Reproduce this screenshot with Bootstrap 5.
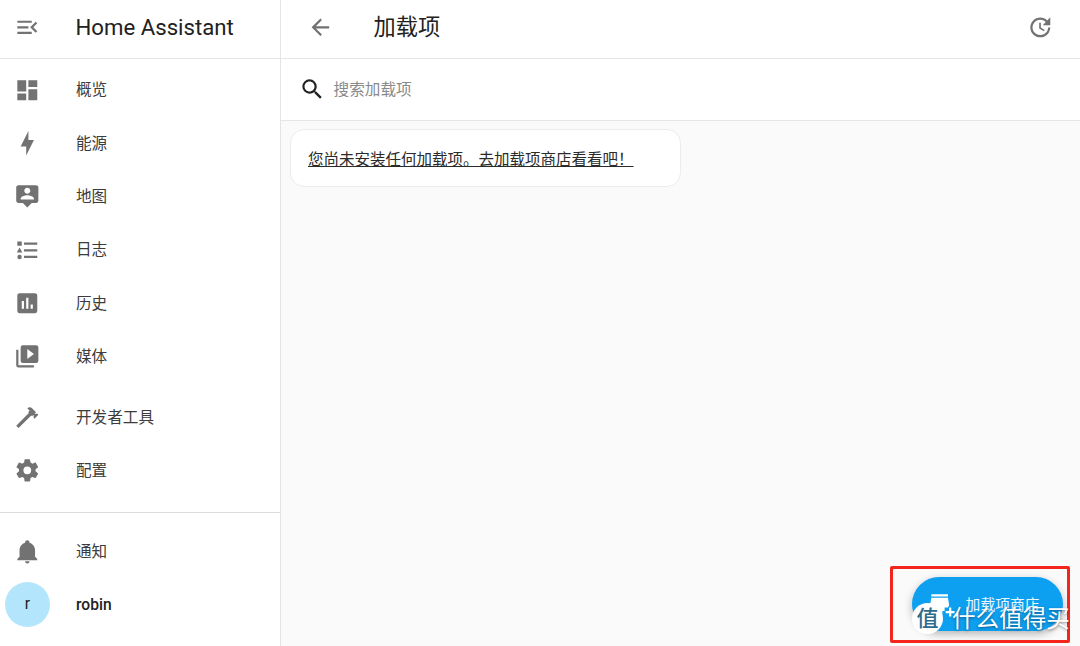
<!DOCTYPE html>
<html lang="zh-CN">
<head>
    <meta charset="UTF-8">
    <meta name="viewport" content="width=device-width, initial-scale=1.0">
    <title>加载项 - Home Assistant</title>
    <link href="https://cdn.jsdelivr.net/npm/bootstrap@5.3.0/dist/css/bootstrap.min.css" rel="stylesheet">
    <style>
        body {
            width: 1080px;
            height: 646px;
            overflow: hidden;
            background: #fff;
            color: #212121;
            font-family: Roboto, "Noto Sans CJK SC", sans-serif;
        }
        .ha-shell { height: 646px; position: relative; }
        .ha-side { width: 281px; border-right: 1px solid #e4e4e4; }
        .ha-top { height: 59px; padding-bottom: 3px; border-bottom: 1px solid #e6e6e6; }
        .ha-title { font-size: 22.2px; line-height: 1; }
        .ha-side .ha-title { margin-left: -.5px; }
        .ha-icon { width: 26.6px; height: 26.6px; fill: #727272; flex: none; }
        .ha-slot { width: 76px; padding-left: 14px; flex: none; }
        .ha-items { padding-top: 4.5px; }
        .ha-row { height: 53.3px; padding-top: 2px; font-size: 15.6px; color: #3c3c3c; text-decoration: none; }
        .ha-row .ha-slot { margin-top: -2px; }
        .ha-tools { margin-top: 7.5px; }
        .ha-foot { margin-top: auto; border-top: 1px solid #dcdcdc; padding-top: 11.5px; padding-bottom: 14.5px; }
        .ha-avatar {
            width: 45px;
            height: 45px;
            margin-left: -9px;
            border-radius: 50%;
            background: #b3e5fc;
            font-size: 15.6px;
            font-weight: 400;
        }
        .ha-user { font-weight: 500; color: #212121; }
        .ha-main { background: #fafafa; min-width: 0; }
        .ha-main .ha-top { background: #fff; padding-left: 26px; padding-right: 26px; }
        .ha-back { margin-right: 40px; }
        .ha-search { height: 62px; background: #fff; border-bottom: 1px solid #e6e6e6; padding-left: 18px; font-size: 15.6px; color: #8a8a8a; }
        .ha-search .ha-icon { fill: #212121; margin-right: 8px; }
        .ha-search span { padding-top: 3px; }
        .ha-empty {
            width: 391px;
            height: 58px;
            margin: 8px 0 0 9px;
            padding-left: 17px;
            padding-top: 5px;
            background: #fff;
            border: 1px solid #ececec;
            border-radius: 14px;
            font-size: 15.5px;
            color: #2b2b2b;
        }
        .ha-empty a { color: inherit; }
        .ha-fab {
            position: absolute;
            left: 912px;
            top: 577px;
            width: 151px;
            height: 54px;
            border-radius: 27px;
            background: #0d9ff0;
            color: #e8f6ff;
            font-size: 14.8px;
            padding-left: 16px;
            box-shadow: 0 3px 8px rgba(0, 0, 0, .28);
        }
        .ha-fab .ha-icon { fill: #fff; margin-right: 11px; }
        .ha-fab span { padding-top: 2px; }
        .ha-mark {
            position: absolute;
            left: 890px;
            top: 566px;
            width: 180px;
            height: 77px;
            border: 3px solid #f3251c;
            border-radius: 2px;
        }
        .ha-stamp {
            position: absolute;
            left: 912px;
            top: 603px;
            width: 31px;
            height: 31px;
            border-radius: 50%;
            background: #fff;
            color: #2f6b8c;
            font-size: 22px;
            font-weight: 500;
            line-height: 1;
        }
        .ha-water {
            position: absolute;
            left: 952px;
            top: 604px;
            color: #fff;
            font-size: 23.6px;
            line-height: 30px;
            white-space: nowrap;
            text-shadow: 0 1px 3px rgba(0, 0, 0, .45);
        }
    </style>
</head>
<body>
    <div class="ha-shell d-flex">
        <aside class="ha-side d-flex flex-column flex-shrink-0">
            <div class="ha-top d-flex align-items-center">
                <div class="ha-slot"><svg class="ha-icon" viewBox="0 0 24 24"><path d="M21,15.61L19.59,17L14.58,12L19.59,7L21,8.39L17.44,12L21,15.61M3,6H16V8H3V6M3,13V11H13V13H3M3,18V16H16V18H3Z"/></svg></div>
                <span class="ha-title">Home Assistant</span>
            </div>
            <nav class="ha-items d-flex flex-column">
                <a class="ha-row d-flex align-items-center" href="#"><span class="ha-slot d-flex"><svg class="ha-icon" viewBox="0 0 24 24"><path d="M13,3V9H21V3M13,21H21V11H13M3,21H11V15H3M3,13H11V3H3V13Z"/></svg></span>概览</a>
                <a class="ha-row d-flex align-items-center" href="#"><span class="ha-slot d-flex"><svg class="ha-icon" viewBox="0 0 24 24"><path d="M11 15H6L13 1V9H18L11 23V15Z"/></svg></span>能源</a>
                <a class="ha-row d-flex align-items-center" href="#"><span class="ha-slot d-flex"><svg class="ha-icon" viewBox="0 0 24 24"><path d="M20 2H4C2.9 2 2 2.9 2 4V16C2 17.1 2.9 18 4 18H8L12 22L16 18H20C21.1 18 22 17.1 22 16V4C22 2.9 21.1 2 20 2M12 4.3C13.5 4.3 14.7 5.5 14.7 7S13.5 9.7 12 9.7 9.3 8.5 9.3 7 10.5 4.3 12 4.3M18 15H6V14.1C6 12.1 10 11 12 11S18 12.1 18 14.1V15Z"/></svg></span>地图</a>
                <a class="ha-row d-flex align-items-center" href="#"><span class="ha-slot d-flex"><svg class="ha-icon" viewBox="0 0 24 24"><path d="M5,9.5L7.5,14H2.5L5,9.5M3,4H7V8H3V4M5,20A2,2 0 0,0 7,18A2,2 0 0,0 5,16A2,2 0 0,0 3,18A2,2 0 0,0 5,20M9,5V7H21V5H9M9,19H21V17H9V19M9,13H21V11H9V13Z"/></svg></span>日志</a>
                <a class="ha-row d-flex align-items-center" href="#"><span class="ha-slot d-flex"><svg class="ha-icon" viewBox="0 0 24 24"><path d="M9 17H7V10H9V17M13 17H11V7H13V17M17 17H15V13H17V17M19 3H5C3.9 3 3 3.9 3 5V19C3 20.1 3.9 21 5 21H19C20.1 21 21 20.1 21 19V5C21 3.9 20.1 3 19 3Z"/></svg></span>历史</a>
                <a class="ha-row d-flex align-items-center" href="#"><span class="ha-slot d-flex"><svg class="ha-icon" viewBox="0 0 24 24"><path d="M4,6H2V20A2,2 0 0,0 4,22H18V20H4V6M20,2A2,2 0 0,1 22,4V16A2,2 0 0,1 20,18H8A2,2 0 0,1 6,16V4A2,2 0 0,1 8,2H20M12,14.5L18,10L12,5.5V14.5Z"/></svg></span>媒体</a>
                <a class="ha-row ha-tools d-flex align-items-center" href="#"><span class="ha-slot d-flex"><svg class="ha-icon" viewBox="0 0 24 24"><path d="M2 19.63L13.43 8.2L12.72 7.5L14.14 6.07L12 3.89C13.2 2.7 15.09 2.7 16.27 3.89L19.87 7.5L18.45 8.91H21.29L22 9.62L18.45 13.21L17.74 12.5V9.62L16.27 11.04L15.56 10.33L4.13 21.76L2 19.63Z"/></svg></span>开发者工具</a>
                <a class="ha-row d-flex align-items-center" href="#"><span class="ha-slot d-flex"><svg class="ha-icon" viewBox="0 0 24 24"><path d="M12,15.5A3.5,3.5 0 0,1 8.5,12A3.5,3.5 0 0,1 12,8.5A3.5,3.5 0 0,1 15.5,12A3.5,3.5 0 0,1 12,15.5M19.43,12.97C19.47,12.65 19.5,12.33 19.5,12C19.5,11.67 19.47,11.34 19.43,11L21.54,9.37C21.73,9.22 21.78,8.95 21.66,8.73L19.66,5.27C19.54,5.05 19.27,4.96 19.05,5.05L16.56,6.05C16.04,5.66 15.5,5.32 14.87,5.07L14.5,2.42C14.46,2.18 14.25,2 14,2H10C9.75,2 9.54,2.18 9.5,2.42L9.13,5.07C8.5,5.32 7.96,5.66 7.44,6.05L4.95,5.05C4.73,4.96 4.46,5.05 4.34,5.27L2.34,8.73C2.21,8.95 2.27,9.22 2.46,9.37L4.57,11C4.53,11.34 4.5,11.67 4.5,12C4.5,12.33 4.53,12.65 4.57,12.97L2.46,14.63C2.27,14.78 2.21,15.05 2.34,15.27L4.34,18.73C4.46,18.95 4.73,19.03 4.95,18.95L7.44,17.94C7.96,18.34 8.5,18.68 9.13,18.93L9.5,21.58C9.54,21.82 9.75,22 10,22H14C14.25,22 14.46,21.82 14.5,21.58L14.87,18.93C15.5,18.67 16.04,18.34 16.56,17.94L19.05,18.95C19.27,19.03 19.54,18.95 19.66,18.73L21.66,15.27C21.78,15.05 21.73,14.78 21.54,14.63L19.43,12.97Z"/></svg></span>配置</a>
            </nav>
            <div class="ha-foot d-flex flex-column">
                <a class="ha-row d-flex align-items-center" href="#"><span class="ha-slot d-flex"><svg class="ha-icon" viewBox="0 0 24 24"><path d="M21,19V20H3V19L5,17V11C5,7.9 7.03,5.17 10,4.29C10,4.19 10,4.1 10,4A2,2 0 0,1 12,2A2,2 0 0,1 14,4C14,4.1 14,4.19 14,4.29C16.97,5.17 19,7.9 19,11V17L21,19M14,21A2,2 0 0,1 12,23A2,2 0 0,1 10,21"/></svg></span>通知</a>
                <a class="ha-row ha-user d-flex align-items-center" href="#"><span class="ha-slot d-flex"><span class="ha-avatar d-flex align-items-center justify-content-center">r</span></span>robin</a>
            </div>
        </aside>

        <main class="ha-main flex-grow-1 d-flex flex-column">
            <div class="ha-top d-flex align-items-center">
                <svg class="ha-icon ha-back" viewBox="0 0 24 24"><path d="M20,11V13H8L13.5,18.5L12.08,19.92L4.16,12L12.08,4.08L13.5,5.5L8,11H20Z"/></svg>
                <span class="ha-title">加载项</span>
                <svg class="ha-icon ms-auto" viewBox="0 0 24 24"><path d="M21,10.12H14.22L16.96,7.3C14.23,4.6 9.81,4.5 7.08,7.2C4.35,9.91 4.35,14.28 7.08,17C9.81,19.7 14.23,19.7 16.96,17C18.32,15.65 19,14.08 19,12.1H21C21,14.08 20.12,16.65 18.36,18.39C14.85,21.87 9.15,21.87 5.64,18.39C2.14,14.92 2.11,9.28 5.62,5.81C9.13,2.34 14.76,2.34 18.27,5.81L21,3V10.12M12.5,8V12.25L16,14.33L15.28,15.54L11,13V8H12.5Z"/></svg>
            </div>
            <div class="ha-search d-flex align-items-center">
                <svg class="ha-icon" viewBox="0 0 24 24"><path d="M9.5,3A6.5,6.5 0 0,1 16,9.5C16,11.11 15.41,12.59 14.44,13.73L14.71,14H15.5L20.5,19L19,20.5L14,15.5V14.71L13.73,14.44C12.59,15.41 11.11,16 9.5,16A6.5,6.5 0 0,1 3,9.5A6.5,6.5 0 0,1 9.5,3M9.5,5C7,5 5,7 5,9.5C5,12 7,14 9.5,14C12,14 14,12 14,9.5C14,7 12,5 9.5,5Z"/></svg>
                <span>搜索加载项</span>
            </div>
            <div class="ha-empty d-flex align-items-center">
                <a href="#">您尚未安装任何加载项。去加载项商店看看吧！</a>
            </div>
        </main>

        <div class="ha-fab d-flex align-items-center">
            <svg class="ha-icon" viewBox="0 0 24 24"><path d="M3 3H18V5H3V3M3 6H18L19 12V14H18V15H15V18H13V20H3V14H2V12L3 6Z"/><path d="M19 15H21V18H24V20H21V23H19V20H16V18H19V15Z"/></svg>
            <span>加载项商店</span>
        </div>
        <div class="ha-mark"></div>
        <div class="ha-stamp d-flex align-items-center justify-content-center">值</div>
        <div class="ha-water">什么值得买</div>
    </div>
    <script src="https://cdn.jsdelivr.net/npm/bootstrap@5.3.0/dist/js/bootstrap.bundle.min.js"></script>
</body>
</html>
